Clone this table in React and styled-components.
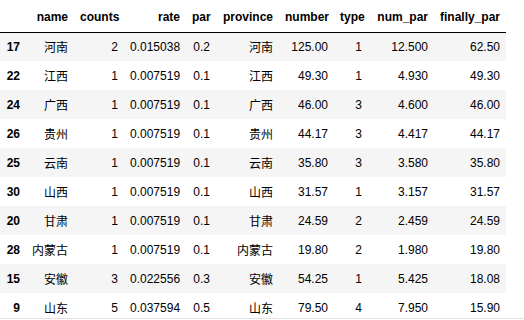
import styled, { createGlobalStyle } from 'styled-components'

const GlobalStyle = createGlobalStyle`
  html, body {
    margin: 0;
    padding: 0;
    background: #ffffff;
  }
  body {
    font-family: "Liberation Sans", Arial, "Noto Sans CJK SC", sans-serif;
    font-size: 12px;
    color: #000000;
  }
`

const columns = [
  { key: 'name', width: 48 },
  { key: 'counts', width: 50 },
  { key: 'rate', width: 62 },
  { key: 'par', width: 30 },
  { key: 'province', width: 63 },
  { key: 'number', width: 55 },
  { key: 'type', width: 34 },
  { key: 'num_par', width: 66 },
  { key: 'finally_par', width: 72 },
]

const rows = [
  ['17', '河南', '2', '0.015038', '0.2', '河南', '125.00', '1', '12.500', '62.50'],
  ['22', '江西', '1', '0.007519', '0.1', '江西', '49.30', '1', '4.930', '49.30'],
  ['24', '广西', '1', '0.007519', '0.1', '广西', '46.00', '3', '4.600', '46.00'],
  ['26', '贵州', '1', '0.007519', '0.1', '贵州', '44.17', '3', '4.417', '44.17'],
  ['25', '云南', '1', '0.007519', '0.1', '云南', '35.80', '3', '3.580', '35.80'],
  ['30', '山西', '1', '0.007519', '0.1', '山西', '31.57', '1', '3.157', '31.57'],
  ['20', '甘肃', '1', '0.007519', '0.1', '甘肃', '24.59', '2', '2.459', '24.59'],
  ['28', '内蒙古', '1', '0.007519', '0.1', '内蒙古', '19.80', '2', '1.980', '19.80'],
  ['15', '安徽', '3', '0.022556', '0.3', '安徽', '54.25', '1', '5.425', '18.08'],
  ['9', '山东', '5', '0.037594', '0.5', '山东', '79.50', '4', '7.950', '15.90'],
]

export default function App() {
  return (
    <>
      <GlobalStyle />
      <Output>
        <DataFrame>
          <colgroup>
            <Col $width={26} />
            {columns.map(c => (
              <Col key={c.key} $width={c.width} />
            ))}
          </colgroup>
          <thead>
            <HeadRow>
              <HeadCell />
              {columns.map(c => (
                <HeadCell key={c.key}>{c.key}</HeadCell>
              ))}
            </HeadRow>
          </thead>
          <tbody>
            {rows.map(([idx, ...cells], i) => (
              <BodyRow key={idx} $striped={i % 2 === 0}>
                <IndexCell>{idx}</IndexCell>
                {cells.map((v, j) => (
                  <Cell key={j}>{v}</Cell>
                ))}
              </BodyRow>
            ))}
          </tbody>
        </DataFrame>
        <ScrollTrack />
      </Output>
    </>
  )
}

const Output = styled.div`
  position: relative;
  width: 524px;
  height: 320px;
  overflow: hidden;
`

const DataFrame = styled.table`
  border-collapse: collapse;
  border-spacing: 0;
  table-layout: fixed;
  width: 506px;
`

const Col = styled.col`
  width: ${({ $width }) => $width}px;
`

const HeadRow = styled.tr`
  height: 32px;
  border-bottom: 1px solid #000000;
`

const HeadCell = styled.th`
  padding: 3px 6px 0;
  text-align: right;
  vertical-align: middle;
  font-weight: bold;
  white-space: nowrap;
`

const BodyRow = styled.tr`
  height: 29px;
  background: ${({ $striped }) => ($striped ? '#f5f5f5' : '#ffffff')};
`

const IndexCell = styled.th`
  padding: 0 6px 0 0;
  text-align: right;
  vertical-align: middle;
  font-weight: bold;
`

const Cell = styled.td`
  padding: 0 6px;
  text-align: right;
  vertical-align: middle;
  white-space: nowrap;
  font-family: "Liberation Sans", Arial, "Noto Sans CJK SC", sans-serif;
`

const ScrollTrack = styled.div`
  position: absolute;
  left: 0;
  right: 0;
  bottom: 1px;
  height: 1px;
  background: #e2e2e2;
`
